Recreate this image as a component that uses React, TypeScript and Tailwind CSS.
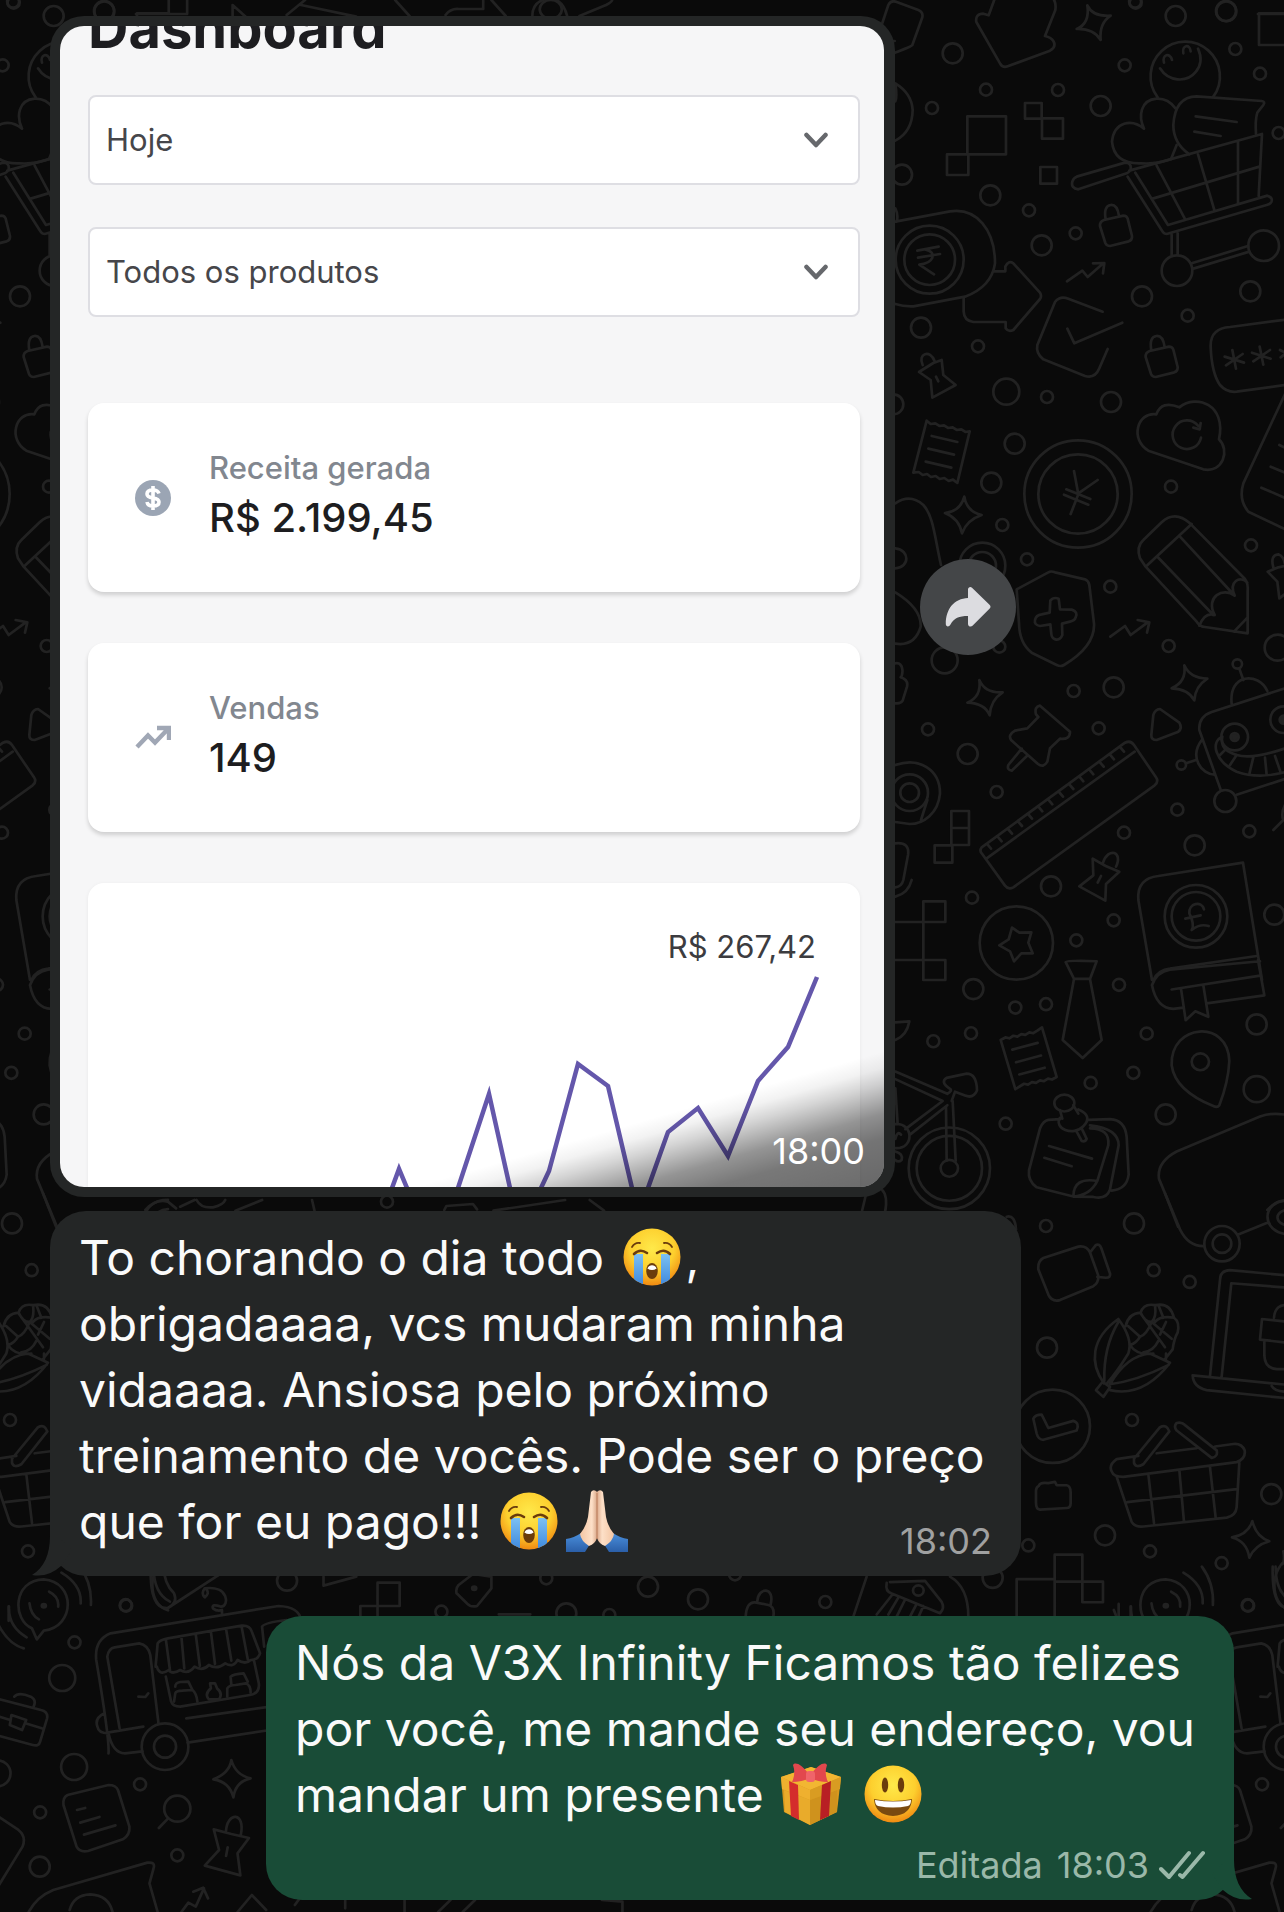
import type { ReactNode } from "react";

type Point = [number, number];

const chartLines = [
    "392,1188 399,1169 407,1188",
    "458,1188 489,1094 510,1188",
    "541,1188 549,1171 578,1064 608,1086 632,1188",
    "648,1188 668,1132 698,1108 728,1156 758,1081 788,1047 817,977",
];

interface DotsProps {
    points: Point[];
    r: number;
    kx?: number;
    ky?: number;
}

function Dots({ points, r, kx = 3, ky = 3 }: DotsProps) {
    return (
        <>
            {points.map(([x, y]) => (
                <ellipse key={`${x}-${y}`} cx={x} cy={y} rx={r * kx} ry={r * ky} />
            ))}
        </>
    );
}

function RightDoodles() {
    return (
        <g id="doodles-right">
            <g transform="translate(860 0) scale(.33333)">
                <Dots r={10} points={[[278, 160], [947, 48], [1099, 34], [722, 318], [391, 586], [545, 736], [846, 889], [1171, 874], [183, 983], [753, 1206], [464, 1331], [394, 1448], [126, 524], [100, 1213]]} />
                <Dots r={6} points={[[827, 8], [378, 269], [594, 270], [794, 196], [1126, 147], [1200, 221], [216, 324], [1256, 399], [507, 631], [647, 700], [983, 947], [354, 1039], [561, 1191], [933, 1460]]} />
                <Dots r={13} points={[[439, 1175]]} />
                {/* tag, arrow, sparkle */}
                <path d="M60 90L85 15Q92 0 108 5L175 30Q190 36 187 52L157 135Q154 140 100 160M90 123h14" />
                <path d="M410 -20L386 46L370 41Q345 42 349 66L420 190Q428 205 443 199L570 152Q590 140 580 123Q574 112 555 108L586 30Q590 5 575 -10" />
                <path d="M682 16Q697 50 752 47Q717 70 722 120Q700 85 650 87Q690 70 682 16Z" />
                <path d="M1290 40H1197V135H1290" />
                {/* blocks */}
                <path d="M322 349h116v114H322zM261 463h64v62h-64zM495 309h50v47h-50zM546 355h63v61h-63zM541 501h50v50h-50z" />
                {/* smiley, heart, note, cart */}
                <path d="M893 292A104 104 0 1 1 1060 290" />
                <path d="M900 205C925 245 980 250 1008 215Q1032 185 1014 146M912 188C905 165 930 155 936 180M970 160C965 135 990 130 992 154" />
                <path d="M852 386C815 355 762 365 756 425C760 470 790 492 845 490Q890 493 933 478L950 435M852 386C835 350 840 300 890 296Q925 295 946 325" />
                <path d="M988 463Q940 430 940 375Q945 290 1010 289L1205 303Q1217 305 1210 315L1192 338Q1185 360 1188 402M1007 349L1130 366M1003 395L1082 408" />
                <path d="M650 530L795 488Q815 488 812 508Q811 514 800 520L655 568Q632 565 637 545Q640 534 650 530ZM808 512L1206 402L1196 588M826 518L924 675L1222 587Q1240 593 1234 606Q1231 612 1220 615L920 702Q912 702 908 695L803 530M878 596L1198 500M890 497L974 655M1014 463L1063 630M1134 425V610M935 704V765M953 700V765M995 790L1164 738M1000 806L1168 755" />
                <circle cx="951" cy="812" r="46" />
                <circle cx="1211" cy="737" r="46" />
                {/* padlocks */}
                <g id="doodle-lock">
                    <path d="M732 660L790 647Q800 647 803 656L816 708Q817 720 806 724L750 738Q740 738 736 729L720 678Q719 665 732 660ZM737 658Q730 618 752 615Q772 613 777 648" />
                </g>
                <use href="#doodle-lock" x="137" y="393" />
                <path d="M621 844L667 812L683 831L730 790M699 790L733 789L729 820" />
                {/* banknote */}
                <circle cx="209" cy="779" r="102" />
                <circle cx="209" cy="779" r="76" />
                <path d="M106 665L270 634C350 622 405 690 405 790Q395 860 315 890L160 919Q130 920 106 912M106 625Q116 645 110 665" />
                <path d="M172 752L236 740M174 773L240 762M195 748Q225 755 216 775Q210 790 178 794L222 823" />
                <path d="M402 814H436V800Q445 780 460 790L540 878Q546 888 540 897L460 990Q445 997 437 985V966H340Q312 962 311 935V892" />
                {/* note with tick */}
                <path d="M728 935L625 896Q600 887 585 906L532 1035Q527 1060 550 1078L675 1128Q705 1137 718 1105L743 1047M622 986L643 1030L787 968" />
                <path d="M177 1116L220 1089L245 1080L250 1125L287 1155L217 1193L212 1140ZM188 1095C172 1062 210 1045 224 1084M228 1130L235 1144" />
                {/* password field */}
                <path d="M1290 957L1110 981Q1050 985 1052 1040Q1055 1120 1080 1155Q1100 1178 1130 1175L1290 1153M1117 1050L1128 1106M1094 1070L1152 1088M1098 1096L1148 1062M1199 1040L1210 1094M1176 1058L1232 1076M1180 1084L1230 1050M1260 1050L1290 1065M1262 1072L1290 1050" />
                {/* receipt */}
                <path d="M200 1262l12 10 14-2 12 8 14-2 12 8 14-2 12 8 14-2 12 8 13-2L292 1449l-13-10-13 4-13-9-14 3-12-9-14 3-12-9-13 3-12-9-16 2ZM215 1308L292 1326M205 1346L282 1364M197 1385L274 1403" />
                {/* cloud */}
                <path d="M889 1243C830 1235 810 1320 865 1352L1030 1408C1090 1420 1110 1350 1077 1318C1100 1215 1010 1180 958 1222Q905 1200 889 1243Z" />
                <path d="M1023 1313A43 43 0 1 1 1014 1277M1022 1269L1019 1288L1000 1283" />
                {/* yen coin */}
                <circle cx="654" cy="1482" r="161" />
                <circle cx="654" cy="1482" r="119" />
                <path d="M642 1413L655 1483L632 1542M655 1480L713 1440M619 1468L691 1497M612 1484L685 1514" />
                <path d="M1290 1150L1150 1450Q1135 1500 1165 1535L1290 1595M1258 1335L1290 1350M1232 1400L1290 1424M1204 1463L1290 1500" />
                <path d="M106 304Q112 290 106 250Q155 280 158 330Q157 395 106 422" />
            </g>
            <g transform="translate(860 480) scale(.33333)">
                <Dots r={6} points={[[427, 135], [501, 238], [751, 320], [1173, 196], [926, 498], [641, 633], [716, 745], [204, 748], [410, 936], [952, 989], [792, 1058], [1168, 1054], [336, 1253], [761, 1321], [649, 1381], [418, 500]]} />
                <Dots r={10} points={[[761, 622], [323, 822], [1004, 1096], [573, 1219], [1243, 1304]]} />
                <Dots r={13} points={[[254, 541], [1253, 503]]} />
                <path d="M313 50Q320 95 365 105Q320 120 306 160Q297 115 255 99Q300 95 313 50Z" />
                <path d="M358 600Q375 640 428 637Q392 660 389 706Q375 670 322 668Q365 650 358 600Z" />
                <path d="M973 556Q990 595 1042 596Q1005 620 1003 661Q985 627 935 625Q980 605 973 556Z" />
                <path d="M106 70Q150 40 190 75C222 110 225 180 243 255M106 205C150 210 150 262 106 265M106 337Q185 385 182 440Q165 500 106 491" />
                <circle cx="367" cy="257" r="69" />
                <circle cx="367" cy="257" r="41" />
                {/* shield */}
                <path d="M470 328L565 277Q573 272 585 277L675 298Q686 303 688 315L702 430C705 480 670 520 612 555Q602 561 590 555L515 518Q478 490 477 430Z" />
                <path d="M571 362Q580 350 596 356L600 388L635 389Q655 395 647 412Q645 422 630 425L606 431L607 465Q600 482 586 478Q575 475 574 462L571 433L540 438Q522 435 525 420Q528 405 545 403L569 398Z" />
                {/* pencil */}
                <path d="M857 260L840 235Q828 200 850 180L905 127Q945 90 990 130L1155 297Q1165 310 1163 335V460L1035 441Q1020 440 1010 425ZM857 260L995 132M893 231L1060 405M960 170L1122 345M1018 437Q1035 395 1064 405C1035 350 1090 320 1124 347C1105 305 1140 285 1162 308M1122 455L1163 412" />
                <path d="M751 470L795 438L812 465L862 428M833 420L868 427L861 458" />
                <path d="M1290 330L1258 355L1252 305L1223 275L1255 262L1290 255M1240 262Q1230 225 1255 223Q1270 228 1274 250" />
                {/* push pin */}
                <path d="M540 677Q522 680 528 703L535 711L502 745L465 752Q442 765 454 781L534 852Q550 865 562 845L570 805L600 776Q630 780 630 755ZM485 806L445 855Q440 870 455 872L503 826" />
                <path d="M900 687L958 728Q968 745 955 755L890 780Q873 780 874 765L880 705Q885 688 900 687Z" />
                {/* robot */}
                <circle cx="1132" cy="552" r="14" />
                <circle cx="964" cy="855" r="14" />
                <path d="M1138 566L1150 600M978 850L1008 840M1115 672C1105 580 1195 575 1222 633M1290 620L1055 696Q1015 710 1018 750L1083 932M1027 778C985 830 1025 885 1065 884M1130 944L1290 892" />
                <circle cx="1124" cy="771" r="40" />
                <circle cx="1124" cy="771" r="12" fill="#222" />
                <circle cx="1271" cy="719" r="40" />
                <circle cx="1271" cy="719" r="12" fill="#222" />
                <circle cx="1096" cy="963" r="33" />
                <path d="M1087 770C1050 785 1065 845 1130 875Q1200 900 1290 872M1087 770Q1078 810 1130 825Q1180 840 1290 800M1080 825L1100 805M1110 855L1130 825M1168 882L1180 832M1220 885L1215 833M1262 877L1245 828M1240 1050L1270 1020Q1262 1000 1275 975" />
                {/* ruler */}
                <path d="M365 1102L795 788Q812 780 822 795L888 892Q897 905 884 916L460 1222Q445 1230 435 1217L365 1120Q358 1112 365 1102ZM380 1135L824 815M381 1092l12 14M413 1070l12 14M444 1047l12 14M474 1024l12 14M504 1002l12 14M535 980l12 14M565 959l12 14M597 936l12 14M628 913l12 14M658 890l12 14M688 869l12 14M719 846l12 14M750 824l12 14M780 801l12 14" />
                {/* tape roll */}
                <circle cx="149" cy="938" r="28" />
                <circle cx="149" cy="938" r="55" />
                <path d="M106 855C180 830 240 870 240 940C235 1000 190 1032 149 1032L106 1026M202 960L183 1020" />
                <path d="M274 993h53v51h-53zM274 1044h53v51h-53zM224 1096h53v52h-53zM190 1264h66v62h-66zM106 1326H190V1440H106M190 1440h66v60h-66z" />
                <path d="M106 1090Q150 1085 144 1125L130 1200Q125 1220 106 1222M155 1200Q145 1240 106 1250M106 550C135 545 128 590 122 592Q146 600 141 620L128 662Q122 672 106 670" />
                <path d="M698 1136L737 1158L778 1175L738 1212L736 1262L658 1219L700 1186ZM729 1148C745 1100 790 1115 768 1160M723 1188L713 1208" />
                <circle cx="469" cy="1389" r="110" />
                <path d="M456 1343L478 1358L514 1357L505 1388L518 1420L484 1420L462 1444L450 1414L418 1396L446 1378Z" />
                {/* pound book */}
                <circle cx="1008" cy="1309" r="94" />
                <circle cx="1008" cy="1309" r="73" />
                <path d="M1032 1288C1025 1260 985 1270 988 1300Q1005 1335 995 1350Q1020 1330 1046 1338M976 1316L1022 1306" />
                <path d="M876 1500L835 1260Q830 1195 895 1188L1149 1148L1206 1500M880 1500Q895 1470 930 1466L1190 1428" />
            </g>
            <g transform="translate(860 960) scale(.33333 .42088)">
                <Dots r={6} ky={2.376} points={[[466, 113], [558, 105], [777, 59], [860, 175], [333, 174], [220, 193], [820, 268], [692, 292], [437, 389], [558, 632], [881, 737], [989, 765], [816, 1093], [870, 1405], [1085, 1433], [505, 1391], [1163, 1533]]} />
                <Dots r={10} ky={2.376} points={[[340, 69], [1190, 153], [917, 367], [822, 626], [561, 921], [735, 1367], [1234, 1269], [398, 1468]]} />
                <Dots r={13} ky={2.376} points={[[1190, 307]]} />
                {/* tie, book foot, receipt */}
                <path d="M617 5Q620 0 710 3L690 45H642ZM642 45L608 190L668 233L725 190L690 45" />
                <path d="M876 60Q890 115 940 116L970 113M876 60Q890 28 930 23L1200 3M935 70L1200 37M1194 0L1213 84L1040 103M963 68L977 143L1006 122L1045 135L1030 60" />
                <path d="M422 190l14-6 12 2 12-6 12 2 12-6 12 2 12-6 12 2 12-6 14-8L590 278l-14 6-12-2-12 6-12-2-12 6-12-2-12 6-12-2-12 6-14 7ZM457 213L533 197M468 243L543 227M478 272L554 256" />
                {/* map pin */}
                <path d="M935 250C930 150 1105 140 1108 240Q1105 290 1078 345Q1072 352 1060 347Q945 310 935 250Z" />
                <ellipse cx="1021" cy="242" rx="26" ry="20" />
                {/* bike */}
                <ellipse cx="268" cy="495" rx="122" ry="97" />
                <ellipse cx="268" cy="495" rx="98" ry="77" />
                <ellipse cx="268" cy="495" rx="26" ry="20" />
                <path d="M106 265L262 318M106 283L248 335L136 402M262 345L150 415M258 350L260 477M278 335L287 477M262 318Q280 310 268 305Q240 290 260 280L320 270Q350 270 351 310Q340 330 315 322L285 313L275 335M106 305L113 390M106 390C160 385 165 450 106 447M123 415Q112 405 106 425M106 455Q130 460 125 475Q115 482 106 475M106 148L148 146Q140 180 106 190" />
                {/* pinned notes */}
                <ellipse cx="613" cy="340" rx="30" ry="20" />
                <path d="M600 357L607 377M640 345L655 365M600 375C580 400 640 420 670 395Q700 370 655 355M648 405L665 430Q675 433 680 425L665 400M600 378L565 380Q550 382 540 400L507 500Q503 525 530 540L640 562L700 563Q740 570 750 545L776 440Q775 400 690 393M640 562Q640 515 712 525L745 440Q750 400 690 400M712 525Q690 560 640 562M685 380L750 378Q795 380 800 420L806 510Q800 545 755 548M567 442L696 472M553 470L635 490" />
                {/* van */}
                <path d="M1290 370Q1240 360 1200 372L950 455Q890 480 897 520L960 640Q985 680 1030 680M1135 652L1220 625M1290 570C1200 570 1200 650 1290 652M1290 592C1240 595 1240 628 1290 632" />
                <ellipse cx="1086" cy="674" rx="53" ry="42" />
                <ellipse cx="1086" cy="674" rx="28" ry="22" />
                {/* camera */}
                <path d="M550 708L655 681Q680 678 690 695L715 750Q716 768 700 775L600 808Q575 813 565 795L535 735Q533 715 550 708ZM690 695L708 677Q718 673 724 685L750 745Q752 755 738 755L712 753" />
                {/* laptop */}
                <path d="M1290 750L1110 737Q1080 738 1080 760L1050 988M1290 779L1114 768L1085 990M998 987Q1000 1015 1040 1022L1290 1042M998 987L1290 1010M1290 860L1206 853L1200 902L1290 910M1213 907V940Q1215 970 1250 972H1290M1242 850Q1245 815 1290 820M1235 1012Q1245 1028 1290 1025" />
                {/* corn */}
                <path d="M732 1006C690 960 690 900 775 853Q820 900 805 935Q770 980 742 1005M775 860Q730 920 733 1000M750 1008Q800 940 870 935L930 957Q850 1040 750 1022M750 1008Q830 1000 926 962M708 1022L728 1002L750 1015L730 1038ZM797 870Q805 840 842 838Q850 815 885 820Q930 812 942 850Q960 860 953 885Q942 900 938 925L915 948M842 838Q855 860 875 860Q890 850 885 820M875 860L935 900M875 860Q860 890 840 895L805 870M840 895Q830 910 810 915M842 840L915 920M895 905Q880 930 850 932M885 860Q900 845 942 850M900 890L918 860M810 915Q830 940 880 935M910 850L895 820M918 935V948" />
                {/* clock */}
                <ellipse cx="578" cy="1108" rx="112" ry="87" />
                <path d="M520 1090Q525 1080 545 1080L565 1112L640 1095Q660 1100 650 1118L550 1140Q535 1140 530 1125Z" />
                {/* basket */}
                <path d="M822 1185L900 1110Q920 1102 928 1120L850 1198Q828 1208 822 1195ZM950 1100Q965 1097 975 1105L1070 1165Q1075 1180 1055 1183L950 1118Q940 1108 950 1100ZM835 1178L770 1186Q745 1200 755 1215Q760 1228 790 1228L1130 1193Q1158 1185 1154 1165Q1145 1148 1120 1150L1065 1156M890 1172L1010 1160M770 1228L815 1335Q825 1348 850 1346L1100 1325Q1128 1320 1130 1300L1138 1195M865 1222L882 1338M958 1212L972 1335M1050 1205L1067 1325M802 1288L1130 1257" />
                <path d="M536 1250Q540 1240 565 1243L585 1240L590 1248L620 1248Q632 1250 632 1265V1290Q632 1302 620 1302L540 1306Q528 1305 528 1290V1260Q530 1252 536 1250Z" />
                <path d="M1177 1333Q1188 1370 1228 1381Q1185 1390 1168 1420Q1160 1380 1116 1372Q1165 1365 1177 1333Z" />
                <path d="M584 1560V1413H667V1477H584M470 1560V1471H584M667 1477H729V1526H667V1477M776 1530V1570M812 1536V1570M1290 1420C1230 1440 1225 1530 1290 1545M1268 1435Q1275 1425 1270 1405" />
                {/* bank building */}
                <path d="M20 1465L-20 1560M80 1480Q75 1500 95 1505L240 1552Q255 1540 245 1525L195 1475L90 1478M95 1510L50 1555M115 1515L85 1555M135 1520L110 1560M170 1530L150 1560M190 1535L175 1562M270 1465Q325 1490 325 1560" />
                <ellipse cx="175" cy="1498" rx="16" ry="12" />
                <path d="M20 550L5 600M65 545Q85 560 75 600M440 610Q465 605 468 640" />
            </g>
            <g transform="translate(600 1470) scale(.33333)">
                <Dots r={6} points={[[28, 435], [405, 313], [676, 396]]} />
                <Dots r={10} points={[[144, 350], [294, 388]]} />
                <path d="M437 440Q440 395 465 397L505 405Q525 410 520 440M472 393C475 350 525 350 512 403" />
            </g>
        </g>
    );
}

function LeftDoodles() {
    return (
        <g id="doodles-left">
            <g transform="translate(0 1560) scale(.4095 .33333)">
                <Dots r={6} kx={2.442} points={[[308, 137], [182, 247], [342, 673], [98, 757], [433, 886], [1078, 155], [1334, 55]]} />
                <Dots r={10} kx={2.442} points={[[97, 920], [701, 62], [1383, 160]]} />
                <Dots r={13} kx={2.442} points={[[152, 354], [181, 621], [-6, 640]]} />
                {/* broadcast */}
                <path d="M90 238L78 205C30 180 30 60 107 58C185 65 185 200 107 212ZM120 95Q145 110 142 140M72 130Q75 165 95 178M150 38Q200 75 197 130M195 20Q225 70 222 135M22 140Q20 200 65 232M-20 150Q10 250 58 265" />
                <circle cx="107" cy="137" r="5" fill="#222" />
                {/* pizza and string */}
                <path d="M368 20Q365 150 410 144L540 40M375 20Q375 100 415 125M400 20Q400 70 425 100Q435 130 410 144M500 85C560 75 560 140 540 140Q515 130 520 145Q530 155 542 150V165M500 85Q490 100 500 112Q512 100 505 90" />
                {/* van */}
                <path d="M265 580Q268 540 235 300Q230 240 270 220L680 138Q730 140 735 180M292 505L262 290Q265 265 280 262L340 250Q362 255 367 285L387 490M262 518L350 500M455 475L660 440M265 520Q275 580 305 580L348 574M458 548L660 510M255 460Q230 475 238 500Q240 520 265 520M338 410L355 411L362 400M380 320L385 250Q390 240 410 235L590 197Q610 195 615 215L635 280Q630 300 612 300Q600 315 580 300Q570 325 550 310Q530 330 510 315Q495 335 475 320Q460 345 440 330Q420 345 412 330Q390 350 383 320M405 238L415 330M443 230L450 325M478 223L488 318M515 215L525 312M552 207L565 302M590 200L605 298M405 350L418 425Q422 440 440 440L610 405Q635 400 632 370L620 300" />
                <path d="M428 380Q428 368 440 366L460 365L470 390M425 425L428 400Q430 392 445 392L470 390Q480 400 482 425M508 415Q500 400 515 385L513 370H525L530 385Q545 400 535 418H510M555 410V385Q560 375 575 375L600 370Q612 375 612 398M565 375L563 350Q570 342 595 340L605 365M645 260L640 200Q645 188 700 180" />
                <ellipse cx="403" cy="560" rx="57" ry="70" />
                <ellipse cx="403" cy="560" rx="27" ry="33" />
                {/* briefcase */}
                <path d="M-10 415L100 450Q118 455 115 475L98 545Q95 560 80 555L-10 525M-10 467L25 480M62 490L102 505M28 465L64 480L54 510L24 495ZM35 410Q45 395 75 410Q90 420 82 440" />
                {/* note, lens, sparkle */}
                <path d="M165 705L265 675Q283 675 288 690L316 800Q318 825 300 838L215 873Q195 878 187 860L155 735Q153 712 165 705ZM188 750L208 744M196 788L243 771M205 824L282 796" />
                <ellipse cx="433" cy="746" rx="32" ry="39" />
                <path d="M410 776L388 804M565 600Q575 645 612 655Q575 665 570 712Q560 665 521 658Q560 640 565 600Z" />
                <path d="M522 808L565 822L608 834L580 880L587 946L500 917L535 870ZM552 812C555 755 600 755 588 825M556 862L552 888" />
                <path d="M-10 765L45 810Q65 830 55 860L-10 990M70 1056Q90 1010 130 990L360 908Q380 905 375 925L365 970L385 1056M170 1050Q180 1005 220 1003Q265 1005 275 1056M443 1056L460 1028L478 1040L498 985M472 995L496 983L508 1015M580 1056L615 1005L650 1050M735 1010L720 1035M843 1020V1045M988 1020V1056M1100 1020L1070 1056M1160 1020L1130 1056M1520 1025V1056M1470 1020L1520 1025" />
                {/* bits between the bubbles */}
                <path d="M790 50V77L870 50M922 68h54v70h-54zM880 170V138H922V170M1155 42L1200 50V85L1165 138Q1150 143 1140 130L1115 100Q1112 85 1120 75ZM1218 163H1295" />
                <circle cx="1158" cy="85" r="5" fill="#222" />
            </g>
            <g transform="scale(.4095 .33333)">
                <Dots r={6} kx={2.442} points={[[32, 5]]} />
                <Dots r={10} kx={2.442} points={[[254, 33]]} />
                <path d="M332 42H412V0M457 0V42H412M568 50V15L600 50M700 45L745 0M735 15L870 50M965 0L1000 48M1088 45Q1100 25 1120 27H1180V0M1200 0L1235 48M1300 48Q1300 0 1345 -5M1385 48Q1375 0 1345 -5M1415 48L1480 15Q1495 5 1495 0" />
                <ellipse cx="1345" cy="28" rx="27" ry="28" />
            </g>
            <g transform="translate(0 1200) scale(.4095 .33333)">
                <path d="M105 -20L137 80M355 30Q380 -5 410 5L430 25M440 20L475 0M480 0Q490 25 520 22Q545 15 550 0M575 32Q620 10 640 0M762 0L768 32M1085 30L1090 18L1155 12L1165 28M1205 32L1380 0M1440 0L1475 32" />
                <Dots r={6} kx={2.442} points={[[945, 5]]} />
            </g>
        </g>
    );
}

function Wallpaper() {
    return (
        <svg
            className="absolute inset-0 h-full w-full [&_*]:[vector-effect:non-scaling-stroke]"
            fill="none"
            stroke="#222"
            strokeWidth="2.7"
            strokeLinecap="round"
            strokeLinejoin="round"
            aria-hidden="true"
        >
            <RightDoodles />
            <LeftDoodles />
            <use href="#doodles-right" x="-1122" />
            <use href="#doodles-left" x="1122" />
        </svg>
    );
}

function Emoji({ label, children }: { label: string; children: ReactNode }) {
    return (
        <svg
            className="inline-block h-16 w-[68px] align-[-14px]"
            viewBox="-2 0 68 64"
            role="img"
            aria-label={label}
        >
            {children}
        </svg>
    );
}

function FaceGradient({ id }: { id: string }) {
    return (
        <radialGradient id={id} cx=".5" cy=".35" r=".65">
            <stop offset="0" stopColor="#ffe94a" />
            <stop offset=".6" stopColor="#fdcf2e" />
            <stop offset="1" stopColor="#f08a12" />
        </radialGradient>
    );
}

function CryingFace({ id }: { id: string }) {
    return (
        <Emoji label="😭">
            <defs>
                <FaceGradient id={id} />
                <linearGradient id={`${id}-tear`} x1="0" x2="0" y1="0" y2="1">
                    <stop offset="0" stopColor="#7cc0f2" />
                    <stop offset="1" stopColor="#3b86dc" />
                </linearGradient>
                <clipPath id={`${id}-clip`}>
                    <circle cx="32" cy="32" r="28.5" />
                </clipPath>
            </defs>
            <circle cx="32" cy="32" r="28.5" fill={`url(#${id})`} />
            <g clipPath={`url(#${id}-clip)`} fill={`url(#${id}-tear)`}>
                <path d="M14 29H23V62H14Z" />
                <path d="M41 29H50V62H41Z" />
            </g>
            <g fill="none" stroke="#6b3c0c" strokeLinecap="round">
                <path d="M12 22Q15 17 20 18" strokeWidth="1.8" />
                <path d="M52 22Q49 17 44 18" strokeWidth="1.8" />
                <path d="M14 29Q20 23 27 28" strokeWidth="2.6" />
                <path d="M50 29Q44 23 37 28" strokeWidth="2.6" />
            </g>
            <ellipse cx="32" cy="46" rx="5.8" ry="8" fill="#6b3c0c" />
            <path d="M27.4 43.5A5.4 7 0 0 1 36.6 43.5Q32 46.5 27.4 43.5Z" fill="#fff" />
        </Emoji>
    );
}

function FoldedHands() {
    return (
        <Emoji label="🙏🏻">
            <defs>
                <linearGradient id="hand" x1="0" x2="1" y1="0" y2="0">
                    <stop offset="0" stopColor="#f3c5a3" />
                    <stop offset=".35" stopColor="#fde0c8" />
                    <stop offset=".5" stopColor="#dba98a" />
                    <stop offset=".65" stopColor="#fde0c8" />
                    <stop offset="1" stopColor="#f3c5a3" />
                </linearGradient>
                <linearGradient id="sleeve" x1="0" x2="0" y1="0" y2="1">
                    <stop offset="0" stopColor="#4a8fdc" />
                    <stop offset="1" stopColor="#2b5fa8" />
                </linearGradient>
            </defs>
            <path d="M1 50Q9 49 16 44L25 55L20 63H1Z" fill="url(#sleeve)" />
            <path d="M63 50Q55 49 48 44L39 55L44 63H63Z" fill="url(#sleeve)" />
            <path
                d="M26 3Q28 0 31 2L32 3L33 2Q36 0 38 3L41 28Q43 38 49 45Q48 52 40 57Q34 55 32 49Q30 55 24 57Q16 52 15 45Q21 38 23 28Z"
                fill="url(#hand)"
            />
            <path d="M32 4V50" stroke="#b97a58" strokeWidth="1" />
        </Emoji>
    );
}

function Gift() {
    return (
        <Emoji label="🎁">
            <path d="M2 15L32 5L62 15L58 50L31 63L5 50Z" fill="#d8981d" />
            <path d="M2 15L32 5L62 15L31 28Z" fill="#f2b632" />
            <path d="M5 28L31 38V63L6 50Z" fill="#e9ab2b" />
            <path d="M58 28L31 38V63L58 50Z" fill="#cf921d" />
            <path d="M2 15L31 28V38L3 27Z" fill="#efb02f" />
            <path d="M62 15L31 28V38L61 27Z" fill="#d99c22" />
            <path d="M10 19L19 23L20 58L12 54Z" fill="#d42c2c" />
            <path d="M52 19L43 23L41 58L50 54Z" fill="#b81f24" />
            <path d="M31 14C22 0 15 0 14 3Q17 12 13 20Q23 20 31 16Z" fill="#e2484d" />
            <path d="M31 14C40 0 47 0 48 3Q45 12 49 20Q39 20 31 16Z" fill="#e2484d" />
            <rect x="27" y="9" width="9" height="11" rx="3" fill="#f0646a" />
        </Emoji>
    );
}

function GrinningFace() {
    return (
        <Emoji label="😃">
            <defs>
                <FaceGradient id="grin" />
            </defs>
            <circle cx="32" cy="32" r="28.5" fill="url(#grin)" />
            <ellipse cx="24" cy="23" rx="3.2" ry="7.5" fill="#6b3c0c" />
            <ellipse cx="40" cy="23" rx="3.2" ry="7.5" fill="#6b3c0c" />
            <path d="M13 37Q32 41 51 37Q50 53 32 54Q14 53 13 37Z" fill="#7a4a10" />
            <path d="M14 38Q32 41 50 38Q50 43 47 44Q32 47 17 44Q14 43 14 38Z" fill="#fff" />
        </Emoji>
    );
}

function Filter({ label, value }: { label: string; value: string }) {
    return (
        <div className="relative">
            <select
                aria-label={label}
                className="h-[90px] w-full appearance-none rounded-lg border-2 border-[#dedee3] bg-white pl-4 text-[31px] text-[#46464a]"
            >
                <option>{value}</option>
            </select>
            <svg
                className="pointer-events-none absolute top-[37px] right-8 h-4 w-6"
                viewBox="0 0 24 16"
                fill="none"
                stroke="#66686c"
                strokeWidth="4.5"
                strokeLinecap="round"
                strokeLinejoin="round"
                aria-hidden="true"
            >
                <path d="M2.5 3L12 13L21.5 3" />
            </svg>
        </div>
    );
}

interface StatCardProps {
    icon: ReactNode;
    label: string;
    value: string;
}

function StatCard({ icon, label, value }: StatCardProps) {
    return (
        <div className="flex h-[189px] items-center gap-[38px] rounded-2xl bg-white pl-[47px] shadow-[0_3px_4px_rgba(0,0,0,0.16)]">
            {icon}
            <div className="pb-1 font-medium">
                <p className="text-[31px] leading-9 text-[#82878f]">{label}</p>
                <p className="mt-2 text-[40px] leading-[48px] text-[#1d1d20]">
                    {value}
                </p>
            </div>
        </div>
    );
}

function Dashboard() {
    return (
        <div className="relative overflow-hidden rounded-[24px] bg-[#f6f6f7] pr-6 pl-7">
            <h1 className="-mt-7 mb-[37px] text-[56px] leading-[60px] font-bold text-[#1d1d20]">
                Dashboard
            </h1>

            <div className="flex flex-col gap-[42px]">
                <Filter label="Período" value="Hoje" />
                <Filter label="Produto" value="Todos os produtos" />
            </div>

            <div className="mt-[86px] flex flex-col gap-[51px]">
                <StatCard
                    label="Receita gerada"
                    value="R$ 2.199,45"
                    icon={
                        <svg className="size-9" viewBox="0 0 36 36" fill="none" aria-hidden="true">
                            <circle cx="18" cy="18" r="18" fill="#9ba5b4" />
                            <path
                                d="M24 13.5C23 10.5 20.5 10 18 10C15 10 12 11 12 14C12 20 24 16 24 22C24 25 21 26 18 26C15 26 12.5 25 12 22M18 6V30"
                                stroke="#fff"
                                strokeWidth="3.6"
                            />
                        </svg>
                    }
                />
                <StatCard
                    label="Vendas"
                    value="149"
                    icon={
                        <svg
                            className="size-9"
                            viewBox="0 0 36 36"
                            fill="none"
                            stroke="#a0a7b5"
                            strokeWidth="4.4"
                            aria-hidden="true"
                        >
                            <path d="M2 27L13 15.5L20 22.5L32 10M22 8H34V20" />
                        </svg>
                    }
                />
                <div className="rounded-t-2xl bg-white pt-[46px] shadow-[0_1px_4px_rgba(0,0,0,0.06)]">
                    <p className="pr-11 text-right text-[31px] leading-9 text-[#3c3c40]">
                        R$ 267,42
                    </p>
                    <svg
                        className="block w-full"
                        viewBox="88 965 772 222"
                        fill="none"
                        stroke="#6457ab"
                        strokeWidth="4.5"
                        aria-hidden="true"
                    >
                        {chartLines.map((points) => (
                            <polyline key={points} points={points} />
                        ))}
                    </svg>
                </div>
            </div>

            <div className="absolute right-0 bottom-0 h-[136px] w-[470px] bg-[linear-gradient(to_bottom_right,transparent_50%,rgba(0,0,0,0.05)_56%,rgba(0,0,0,0.17)_62%,rgba(0,0,0,0.42)_73%,rgba(0,0,0,0.53)_82%,rgba(0,0,0,0.58)_100%)]" />
            <time className="absolute right-[19px] bottom-3 text-[36px] leading-[48px] text-white">
                18:00
            </time>
        </div>
    );
}

export default function App() {
    return (
        <main className="relative min-h-screen overflow-hidden bg-[#0a0a0a] px-[50px] pt-4 pb-3 font-[Inter,sans-serif]">
            <Wallpaper />

            <div className="relative flex flex-col">
                <div className="flex items-center gap-[25px]">
                    <div className="w-full max-w-[845px] rounded-[34px] bg-[#242626] py-[10px] pr-[11px] pl-[10px]">
                        <Dashboard />
                    </div>
                    <button
                        type="button"
                        aria-label="Encaminhar"
                        className="flex size-24 shrink-0 items-center justify-center rounded-full bg-[#444648]"
                    >
                        <svg className="h-10 w-[46px]" viewBox="0 0 46 40" fill="#dcdce0" aria-hidden="true">
                            <path d="M23 2.5C23 .3 25.5 -.7 27 .8L44.5 17.8Q46.5 19.8 44.5 21.8L27.5 38.8C26 40.3 23 39.5 23 37V29C14 29 9 31 5.5 37.5C4 40.5 .8 39.8 .8 37C.8 22 9 11.5 23 11Z" />
                        </svg>
                    </button>
                </div>

                <div className="relative mt-[14px] w-full max-w-[971px] rounded-[36px] bg-[#242626] px-[29px] pt-[14px] pb-[17px] text-[48px] leading-[66px] text-[#fafafa]">
                    <svg
                        className="absolute bottom-0 -left-[18px] h-[46px] w-10"
                        viewBox="0 0 40 46"
                        fill="#242626"
                        aria-hidden="true"
                    >
                        <path d="M18 0V6C18 24 12 38 0 45Q16 48 29 36L40 20Z" />
                    </svg>
                    <div className="relative whitespace-nowrap">
                        <p className="h-[66px]">
                            To chorando o dia todo <CryingFace id="cry-a" />,
                        </p>
                        <p>obrigadaaaa, vcs mudaram minha</p>
                        <p>vidaaaa. Ansiosa pelo próximo</p>
                        <p>treinamento de vocês. Pode ser o preço</p>
                        <div className="flex h-[70px] justify-between">
                            <p>
                                que for eu pago!!! <CryingFace id="cry-b" />
                                <FoldedHands />
                            </p>
                            <time className="self-end text-[36px] leading-9 text-[#a0a1a1]">
                                18:02
                            </time>
                        </div>
                    </div>
                </div>

                <div className="relative mt-10 w-full max-w-[968px] self-end rounded-[36px] bg-[#194c37] px-[29px] pt-[14px] pb-[17px] text-[48px] leading-[66px] text-[#fafafa]">
                    <svg
                        className="absolute -right-[18px] bottom-0 h-[46px] w-10"
                        viewBox="0 0 40 46"
                        fill="#194c37"
                        aria-hidden="true"
                    >
                        <path d="M22 0V6C22 24 28 38 40 45Q24 48 11 36L0 20Z" />
                    </svg>
                    <div className="relative whitespace-nowrap">
                        <p>Nós da V3X Infinity Ficamos tão felizes</p>
                        <p>por você, me mande seu endereço, vou</p>
                        <p className="h-[66px]">
                            mandar um presente <Gift /> <GrinningFace />
                        </p>
                        <div className="mt-[19px] flex items-center justify-end gap-[10px] text-[36px] leading-9 text-[#9ab8a9]">
                            <span>Editada</span>
                            <time className="ml-1">18:03</time>
                            <svg
                                className="h-[30px] w-[46px]"
                                viewBox="0 0 46 30"
                                fill="none"
                                stroke="currentColor"
                                strokeWidth="4"
                                strokeLinecap="round"
                                strokeLinejoin="round"
                                role="img"
                                aria-label="Entregue"
                            >
                                <path d="M2 19L10 27L30 3M21 25L23.5 27L44 3" />
                            </svg>
                        </div>
                    </div>
                </div>
            </div>
        </main>
    );
}
